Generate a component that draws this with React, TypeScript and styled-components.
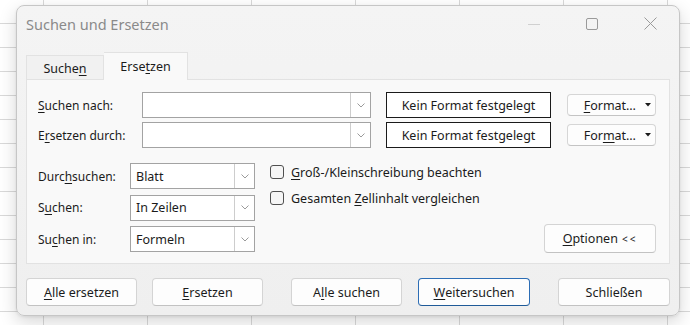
import * as React from 'react'
import styled, { createGlobalStyle } from 'styled-components'

const GlobalStyle = createGlobalStyle`
	html, body {
		margin: 0;
		height: 100%;
	}
	body {
		overflow: hidden;
		background-color: #ffffff;
		background-image:
			linear-gradient(to right, #d9d9d9 1px, transparent 1px),
			linear-gradient(to bottom, #d9d9d9 1px, transparent 1px);
		background-size: 104px 24px;
		background-position: 43px 23px;
		font-family: 'Noto Sans', 'Open Sans', sans-serif;
		font-size: 12px;
		color: #1b1b1b;
	}
	u {
		text-underline-offset: 2px;
	}
`

const Stage = styled.div`
	padding: 5px 0 0 16px;
`

const Dialog = styled.div`
	box-sizing: border-box;
	width: 664px;
	height: 311px;
	padding: 0 9px;
	display: flex;
	flex-direction: column;
	border: 1px solid #c6c6c6;
	border-radius: 8px;
	background: linear-gradient(to bottom, #f4f4f4, #efefef);
	box-shadow: 0 6px 18px rgba(0, 0, 0, 0.16), 0 1px 3px rgba(0, 0, 0, 0.08);
`

const TitleBar = styled.div`
	height: 38px;
	display: flex;
	align-items: center;
	padding-bottom: 3px;
	box-sizing: border-box;
`

const Title = styled.div`
	flex: 1;
	font-size: 14.5px;
	color: #8a8a8a;
`

const WindowControls = styled.div`
	display: flex;
	align-items: center;
	gap: 46px;
	margin-right: 13px;
	color: #9a9a9a;

	svg {
		display: block;
	}
`

const TabStrip = styled.div`
	display: flex;
	align-items: flex-end;
	margin-top: 8px;
	height: 28px;
	position: relative;
	z-index: 1;
`

const Tab = styled.div<{ $active?: boolean }>`
	box-sizing: border-box;
	width: ${p => (p.$active ? 84 : 78)}px;
	height: ${p => (p.$active ? 28 : 25)}px;
	display: flex;
	align-items: center;
	justify-content: center;
	border: 1px solid #e2e2e2;
	border-bottom: ${p => (p.$active ? 'none' : '1px solid #e2e2e2')};
	border-left: ${p => (p.$active ? 'none' : '1px solid #e2e2e2')};
	background: ${p => (p.$active ? '#f9f9f9' : '#f1f1f1')};
	font-size: 12.5px;
	padding-top: ${p => (p.$active ? 0 : 1)}px;
`

const Panel = styled.div`
	box-sizing: border-box;
	height: 185px;
	margin-top: -1px;
	padding: 12px 13px 0 11px;
	background: #f9f9f9;
	border: 1px solid #e2e2e2;
`

const FieldRow = styled.div`
	display: flex;
	align-items: center;
	height: 26px;

	& + & {
		margin-top: 4px;
	}
`

const FieldLabel = styled.div<{ $width: number }>`
	width: ${p => p.$width}px;
	flex-shrink: 0;
`

const Combo = styled.div<{ $width: number }>`
	box-sizing: border-box;
	width: ${p => p.$width}px;
	height: 26px;
	display: flex;
	border: 1px solid #a3a3a3;
	background: #ffffff;
`

const ComboText = styled.div`
	flex: 1;
	display: flex;
	align-items: center;
	padding-left: 5px;
	font-size: 12.5px;
`

const ComboButton = styled.div`
	width: 19px;
	display: flex;
	align-items: center;
	justify-content: center;
	border-left: 1px solid #cdcdcd;
	color: #9a9a9a;
`

const FormatPreview = styled.div`
	box-sizing: border-box;
	width: 165px;
	height: 26px;
	margin-left: 15px;
	display: flex;
	align-items: center;
	justify-content: center;
	border: 1px solid #1a1a1a;
	background: #ffffff;
	font-size: 12.5px;
`

const FormatButton = styled.div`
	box-sizing: border-box;
	width: 89px;
	height: 22px;
	margin-left: 16px;
	display: flex;
	align-items: center;
	justify-content: flex-end;
	gap: 9px;
	padding-right: 4px;
	border: 1px solid #d6d6d6;
	border-bottom-color: #c4c4c4;
	border-radius: 4px;
	background: #fdfdfd;
	font-size: 12.5px;
`

const Lower = styled.div`
	display: flex;
	margin-top: 15px;
`

const SelectGrid = styled.div`
	display: grid;
	grid-template-columns: 92px 125px;
	grid-auto-rows: 26px;
	row-gap: 5.5px;
	align-items: center;
`

const Options = styled.div`
	display: flex;
	flex-direction: column;
	gap: 8px;
	margin-left: 15px;
`

const CheckRow = styled.label`
	display: flex;
	align-items: center;
	gap: 7px;
	height: 18px;
	font-size: 12.5px;
`

const CheckBox = styled.span`
	box-sizing: border-box;
	width: 14px;
	height: 14px;
	border: 1px solid #505050;
	border-radius: 3px;
	background: #f6f6f6;
`

const Button = styled.div<{ $width?: number; $default?: boolean }>`
	box-sizing: border-box;
	width: ${p => p.$width ?? 111}px;
	height: 28px;
	display: flex;
	align-items: center;
	justify-content: center;
	border: 1px solid ${p => (p.$default ? '#2c6db5' : '#d4d4d4')};
	border-bottom-color: ${p => (p.$default ? '#1f5a98' : '#c2c2c2')};
	border-radius: 4px;
	background: #fdfdfd;
	font-size: 12.5px;
`

const OptionsButton = styled(Button)`
	height: 29px;
	margin-left: auto;
	align-self: flex-end;
	margin-bottom: -1px;
`

const Spaced = styled.span`
	letter-spacing: 2px;
	font-size: 10px;
	margin-left: 4px;
`

const ButtonBar = styled.div`
	display: flex;
	justify-content: space-between;
	margin-top: 14px;
`

const ButtonGroup = styled.div<{ $gap: number }>`
	display: flex;
	gap: ${p => p.$gap}px;
`

const Chevron = () => (
	<svg width="8" height="5" viewBox="0 0 8 5">
		<polyline points="0.5,0.5 4,4 7.5,0.5" fill="none" stroke="currentColor" strokeWidth="1" />
	</svg>
)

const Caret = () => (
	<svg width="6" height="4" viewBox="0 0 6 4">
		<polygon points="0,0 6,0 3,3.5" fill="#1b1b1b" />
	</svg>
)

function Select({ value, width }: { value?: string; width: number }) {
	return (
		<Combo $width={width}>
			<ComboText>{value}</ComboText>
			<ComboButton>
				<Chevron />
			</ComboButton>
		</Combo>
	)
}

export default function App() {
	return (
		<>
			<GlobalStyle />
			<Stage>
				<Dialog>
					<TitleBar>
						<Title>Suchen und Ersetzen</Title>
						<WindowControls>
							<svg width="12" height="12" viewBox="0 0 12 12">
								<line x1="0" y1="6.5" x2="12" y2="6.5" stroke="#d0d0d0" strokeWidth="1" />
							</svg>
							<svg width="12" height="12" viewBox="0 0 12 12">
								<rect x="0.5" y="0.5" width="11" height="11" rx="1.5" fill="none" stroke="currentColor" strokeWidth="1" />
							</svg>
							<svg width="13" height="13" viewBox="0 0 13 13">
								<path d="M0.5 0.5 L12.5 12.5 M12.5 0.5 L0.5 12.5" stroke="currentColor" strokeWidth="1" />
							</svg>
						</WindowControls>
					</TitleBar>

					<TabStrip>
						<Tab>
							Suche<u>n</u>
						</Tab>
						<Tab $active>
							Erse<u>t</u>zen
						</Tab>
					</TabStrip>

					<Panel>
						<FieldRow>
							<FieldLabel $width={104}>
								<u>S</u>uchen nach:
							</FieldLabel>
							<Select width={229} />
							<FormatPreview>Kein Format festgelegt</FormatPreview>
							<FormatButton>
								<span>
									<u>F</u>ormat…
								</span>
								<Caret />
							</FormatButton>
						</FieldRow>
						<FieldRow>
							<FieldLabel $width={104}>
								E<u>r</u>setzen durch:
							</FieldLabel>
							<Select width={229} />
							<FormatPreview>Kein Format festgelegt</FormatPreview>
							<FormatButton>
								<span>
									For<u>m</u>at…
								</span>
								<Caret />
							</FormatButton>
						</FieldRow>

						<Lower>
							<SelectGrid>
								<FieldLabel $width={92}>
									Durc<u>h</u>suchen:
								</FieldLabel>
								<Select value="Blatt" width={125} />
								<FieldLabel $width={92}>
									S<u>u</u>chen:
								</FieldLabel>
								<Select value="In Zeilen" width={125} />
								<FieldLabel $width={92}>
									Su<u>c</u>hen in:
								</FieldLabel>
								<Select value="Formeln" width={125} />
							</SelectGrid>
							<Options>
								<CheckRow>
									<CheckBox />
									<span>
										<u>G</u>roß-/Kleinschreibung beachten
									</span>
								</CheckRow>
								<CheckRow>
									<CheckBox />
									<span>
										Gesamten <u>Z</u>ellinhalt vergleichen
									</span>
								</CheckRow>
							</Options>
							<OptionsButton $width={112}>
								<u>O</u>ptionen<Spaced>&lt;&lt;</Spaced>
							</OptionsButton>
						</Lower>
					</Panel>

					<ButtonBar>
						<ButtonGroup $gap={15}>
							<Button>
								<u>A</u>lle ersetzen
							</Button>
							<Button>
								<u>E</u>rsetzen
							</Button>
						</ButtonGroup>
						<ButtonGroup $gap={16}>
							<Button>
								A<u>l</u>le suchen
							</Button>
							<Button $default $width={112}>
								<u>W</u>eitersuchen
							</Button>
						</ButtonGroup>
						<Button $width={112}>Schließen</Button>
					</ButtonBar>
				</Dialog>
			</Stage>
		</>
	)
}
